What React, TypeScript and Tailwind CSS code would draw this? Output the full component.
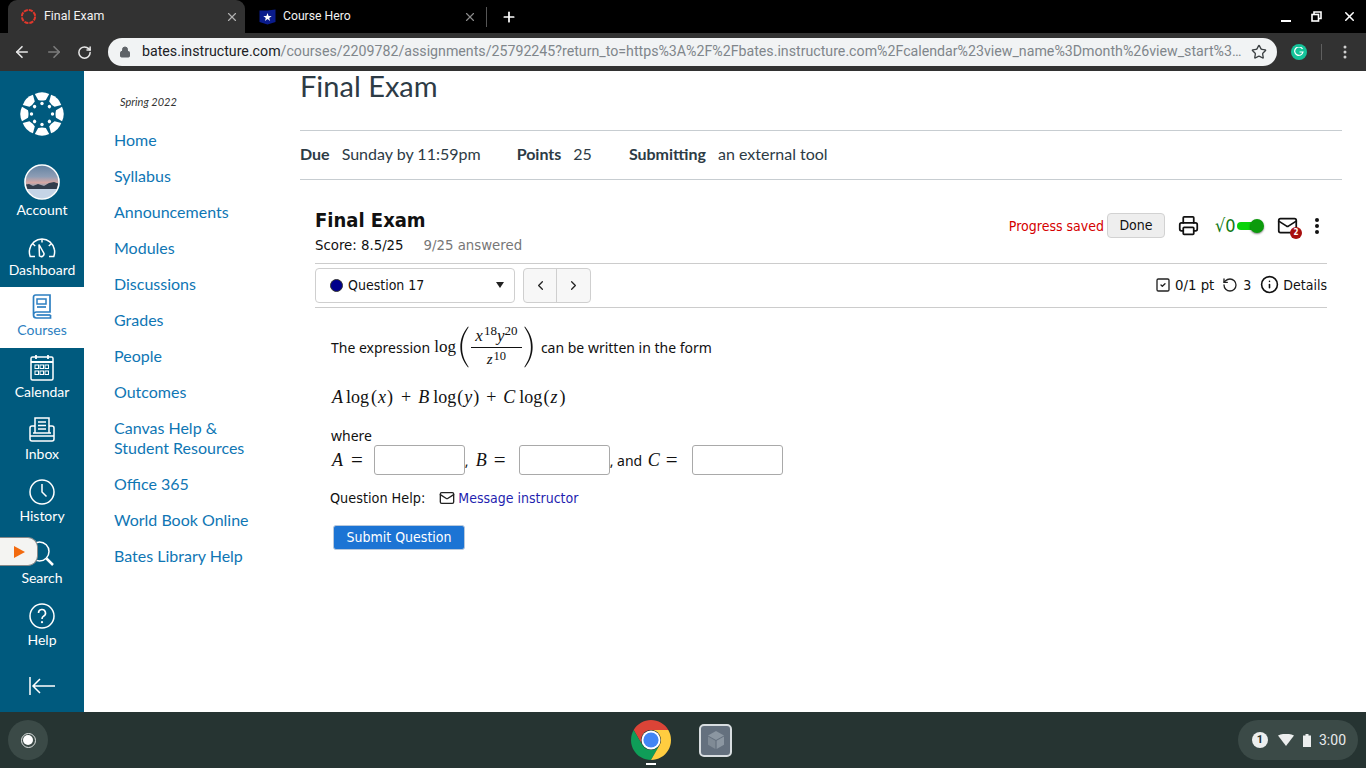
import React from "react";
import { ArrowLeft, ArrowRight, RotateCw, Lock, Star, X, Plus, Printer, Mail, RotateCcw, Info, ChevronLeft, ChevronRight, SquareCheck } from "lucide-react";

const lato = "font-['Lato','Open_Sans',sans-serif]";
const q = "font-['DejaVu_Sans_Condensed','DejaVu_Sans',sans-serif] [font-stretch:condensed]";
const body = "font-['Noto_Sans','DejaVu_Sans',sans-serif]";
const mathF = "font-['Liberation_Serif',serif]";

function CanvasLogo({ size, color }: { size: number; color: string }) {
  const blobs = [0, 45, 90, 135, 180, 225, 270, 315];
  return (
    <svg width={size} height={size} viewBox="-22 -22 44 44">
      {blobs.map((a) => (
        <g key={a} transform={`rotate(${a})`}>
          <path d="M-7.2 -20 Q0 -23.5 7.2 -20 L3.8 -14 Q0 -13 -3.8 -14 Z" fill={color} />
        </g>
      ))}
      {blobs.map((a) => (
        <circle key={a} cx={0} cy={-10.5} r={1.7} fill={color} transform={`rotate(${a})`} />
      ))}
    </svg>
  );
}

function TabFavicon() {
  return (
    <svg width="17" height="17" viewBox="0 0 17 17">
      <circle cx="8.5" cy="8.5" r="6.6" fill="none" stroke="#e0382c" strokeWidth="2" strokeDasharray="4.2 1.0" />
    </svg>
  );
}

function Avatar() {
  return (
    <svg width="36" height="36" viewBox="0 0 36 36">
      <defs>
        <linearGradient id="sky" x1="0" y1="0" x2="0" y2="1">
          <stop offset="0" stopColor="#5f7f9f" />
          <stop offset="0.35" stopColor="#8d9db5" />
          <stop offset="0.52" stopColor="#d8a7a3" />
          <stop offset="0.6" stopColor="#9aa0ae" />
        </linearGradient>
        <clipPath id="av"><circle cx="18" cy="18" r="16.5" /></clipPath>
      </defs>
      <g clipPath="url(#av)">
        <rect width="36" height="36" fill="url(#sky)" />
        <path d="M0 21 L5 20 L9 22 L14 20 L20 22 L25 19 L30 18 L36 20 V27 H0 Z" fill="#333d4c" />
        <rect y="25" width="36" height="11" fill="#c5d4e6" />
      </g>
      <circle cx="18" cy="18" r="17" fill="none" stroke="#fff" strokeWidth="1.6" />
    </svg>
  );
}

function IconDashboard({ c }: { c: string }) {
  return (
    <svg width="28" height="20" viewBox="0 0 28 20" fill="none" stroke={c} strokeWidth="1.5">
      <path d="M7 18.5 H2.2 C1.4 16 1 14 1.6 11.5 C3 5 8 1 14 1 C20 1 25 5 26.4 11.5 C27 14 26.6 16 25.8 18.5 H21" />
      <path d="M11 6.5 L16 15.5 A2.8 2.8 0 0 1 11.5 18 Z" />
      <path d="M14 1 V4.5 M5 6 L7.2 8 M23 6 L20.8 8" />
    </svg>
  );
}
function IconBook({ c }: { c: string }) {
  return (
    <svg width="20" height="26" viewBox="0 0 20 26" fill="none" stroke={c} strokeWidth="1.7">
      <path d="M1.5 21 V3 A2 2 0 0 1 3.5 1 H18 V18 H4.5 A3 3 0 0 0 1.5 21 A3 3 0 0 0 4.5 24 H18.5 V21" />
      <rect x="5" y="5" width="9" height="5" strokeWidth="1.5" />
      <path d="M5 13 H14" />
      <path d="M4.5 21 H18.5" />
    </svg>
  );
}
function IconCalendar({ c }: { c: string }) {
  return (
    <svg width="24" height="27" viewBox="0 0 24 27" fill="none" stroke={c} strokeWidth="1.5">
      <rect x="1" y="3" width="22" height="23" rx="1.5" />
      <path d="M1 8 H23 M6 1 V5 M18 1 V5" strokeWidth="1.8" />
      {[5, 10, 15].map((x) => [11, 17].map((y) => <rect key={`${x}-${y}`} x={x} y={y} width="3.5" height="3.5" strokeWidth="1" />))}
    </svg>
  );
}
function IconInbox({ c }: { c: string }) {
  return (
    <svg width="26" height="25" viewBox="0 0 26 25" fill="none" stroke={c} strokeWidth="1.5">
      <path d="M6 16 V1 H20 V16" />
      <path d="M9 5 H17 M9 8.5 H17 M9 12 H17" />
      <path d="M6 9 H3 A2 2 0 0 0 1 11 V22 A2 2 0 0 0 3 24 H23 A2 2 0 0 0 25 22 V11 A2 2 0 0 0 23 9 H20" />
      <path d="M1 19 H25 M4 16 H22" />
    </svg>
  );
}
function IconClock({ c }: { c: string }) {
  return (
    <svg width="26" height="26" viewBox="0 0 26 26" fill="none" stroke={c} strokeWidth="1.5">
      <circle cx="13" cy="13" r="12" />
      <path d="M13 5 V13 L17.5 17.5" />
    </svg>
  );
}
function IconSearch({ c }: { c: string }) {
  return (
    <svg width="26" height="26" viewBox="0 0 26 26" fill="none" stroke={c} strokeWidth="1.5">
      <circle cx="10.5" cy="10.5" r="9.5" />
      <path d="M17.5 17.5 L24 24" strokeWidth="2.5" />
    </svg>
  );
}
function IconHelp({ c }: { c: string }) {
  return (
    <svg width="26" height="26" viewBox="0 0 26 26" fill="none" stroke={c} strokeWidth="1.5">
      <circle cx="13" cy="13" r="12" />
      <path d="M9.5 10 A3.5 3.5 0 1 1 14.5 13.2 C13.4 13.9 13 14.6 13 16" strokeWidth="1.6" />
      <circle cx="13" cy="19.2" r="1.1" fill={c} stroke="none" />
    </svg>
  );
}

function SideItem({ icon, label, boxCls, iconCls }: { icon: React.ReactNode; label: string; boxCls: string; iconCls: string }) {
  return (
    <div className={`flex flex-col items-center ${boxCls}`}>
      <div className={`flex items-center justify-center ${iconCls}`}>{icon}</div>
      <div className={`${lato} text-[14px] leading-[20px]`}>{label}</div>
    </div>
  );
}

function Sidebar() {
  const w = "#ffffff";
  const std = "h-[62px] pt-[5px] text-white";
  return (
    <div className="relative w-[84px] shrink-0 bg-[#005a7e] flex flex-col">
      <div className="h-[92px] flex items-start justify-center pt-[21px]">
        <CanvasLogo size={44} color="#fff" />
      </div>
      <SideItem icon={<Avatar />} label="Account" boxCls="h-[62px] text-white" iconCls="h-[37px]" />
      <SideItem icon={<IconDashboard c={w} />} label="Dashboard" boxCls="h-[62px] pt-[10px] text-white" iconCls="h-[25px]" />
      <SideItem icon={<IconBook c="#2d7fc1" />} label="Courses" boxCls="h-[61px] pt-[6px] bg-white text-[#2d7fc1]" iconCls="h-[27px]" />
      <SideItem icon={<IconCalendar c={w} />} label="Calendar" boxCls={std} iconCls="h-[29px]" />
      <SideItem icon={<IconInbox c={w} />} label="Inbox" boxCls={std} iconCls="h-[29px]" />
      <SideItem icon={<IconClock c={w} />} label="History" boxCls={std} iconCls="h-[29px]" />
      <SideItem icon={<IconSearch c={w} />} label="Search" boxCls={std} iconCls="h-[29px]" />
      <SideItem icon={<IconHelp c={w} />} label="Help" boxCls={std} iconCls="h-[29px]" />
      <div className="flex justify-center pt-[19px]">
        <svg width="26" height="18" viewBox="0 0 26 18" fill="none" stroke="#fff" strokeWidth="1.5">
          <path d="M1 0 V18 M26 9 H4 M11 2 L4 9 L11 16" />
        </svg>
      </div>
      <div className="absolute left-0 top-[466px] w-[38px] h-[29px] bg-[#f4f4f2] rounded-r-[10px] border border-[#888] border-l-0 flex items-center pl-[14px]">
        <svg width="12" height="12" viewBox="0 0 12 12"><path d="M0 0 L11 6 L0 12 Z" fill="#f26a0f" /></svg>
      </div>
    </div>
  );
}

function TopBar() {
  return (
    <div className="shrink-0 bg-black">
      <div className="h-[33px] flex items-stretch relative text-white">
        <div className="w-[8px]" />
        <div className="w-[237px] bg-[#323232] rounded-t-[9px] flex items-center pl-[12px] pr-[6px] gap-[7px]">
          <TabFavicon />
          <span className="font-['Roboto',sans-serif] text-[12.4px] text-[#f1f1f1] flex-1">Final Exam</span>
          <X size={14} color="#b0b0b0" />
        </div>
        <div className="w-[241px] flex items-center pl-[14px] pr-[9px] gap-[7px]">
          <svg width="17" height="16" viewBox="0 0 17 16">
            <path d="M0.5 1.5 L8.5 1.5 L16.5 0.5 V13 L8.5 15.5 L0.5 13 Z" fill="#0a1c8c" />
            <path d="M8.5 4 L9.6 7 L12.7 7 L10.2 8.9 L11.1 12 L8.5 10.1 L5.9 12 L6.8 8.9 L4.3 7 L7.4 7 Z" fill="#fff" />
          </svg>
          <span className="font-['Roboto',sans-serif] text-[12.2px] text-[#f1f1f1] flex-1">Course Hero</span>
          <X size={14} color="#8a8a8a" />
        </div>
        <div className="w-px h-[20px] bg-[#555] self-center" />
        <div className="flex items-center pl-[14px]"><Plus size={16} strokeWidth={2.6} color="#fff" /></div>
        <div className="flex-1 flex items-center justify-end gap-[20px] pr-[9px]">
          <div className="w-[10px] h-[2px] bg-white mt-[8px]" />
          <svg width="11" height="11" viewBox="0 0 11 11" fill="none" stroke="#fff" strokeWidth="1.6"><path d="M3 3 V1 H10 V7.5 H7.5" /><rect x="1" y="3.5" width="6.5" height="6.5" /></svg>
          <X size={15} strokeWidth={2.4} color="#fff" />
        </div>
      </div>
      <div className="h-[38px] bg-[#323232] flex items-center">
        <div className="w-[108px] flex items-center pl-[13px] gap-[14px] shrink-0">
          <ArrowLeft size={18} color="#e8e8e8" strokeWidth={2.2} />
          <ArrowRight size={18} color="#7c7c7c" strokeWidth={2.2} />
          <RotateCw size={15} color="#e8e8e8" strokeWidth={2.4} />
        </div>
        <div className="w-[1169px] h-[28px] bg-[#f1f3f4] rounded-full flex items-center pl-[11px] pr-[10px] shrink-0">
          <Lock size={12} color="#5f6368" fill="#5f6368" className="shrink-0" />
          <div className="font-['Roboto',sans-serif] text-[14.2px] ml-[11px] whitespace-nowrap flex-1 min-w-0">
            <span className="text-[#202124]">bates.instructure.com</span>
            <span className="text-[#80868b]">/courses/2209782/assignments/25792245?return_to=https%3A%2F%2Fbates.instructure.com%2Fcalendar%23view_name%3Dmonth%26view_start%3…</span>
          </div>
          <Star size={16} color="#3c4043" className="ml-[8px] shrink-0" />
        </div>
        <div className="flex items-center pl-[14px]">
          <div className="w-[16px] h-[16px] rounded-full bg-[#15c39a] flex items-center justify-center">
            <svg width="10" height="10" viewBox="0 0 10 10" fill="none" stroke="#fff" strokeWidth="1.2"><path d="M8.5 2 A4.2 4.2 0 1 0 9 5 H5.5" /></svg>
          </div>
          <div className="w-px h-[16px] bg-[#5f5f5f] ml-[14px]" />
          <svg className="ml-[21px]" width="4" height="14" viewBox="0 0 4 14" fill="#d0d0d0"><circle cx="2" cy="2" r="1.5" /><circle cx="2" cy="7" r="1.5" /><circle cx="2" cy="12" r="1.5" /></svg>
        </div>
      </div>
    </div>
  );
}

function CourseNav() {
  const items = ["Home", "Syllabus", "Announcements", "Modules", "Discussions", "Grades", "People", "Outcomes"];
  const after = ["Office 365", "World Book Online", "Bates Library Help"];
  const cls = `${lato} text-[16px] leading-[20px] text-[#0f76b4]`;
  return (
    <div className="w-[216px] shrink-0 pl-[30px] pt-[25px]">
      <div className={`${lato} italic text-[11px] leading-[12px] text-[#333] pl-[6px] mb-[22px]`}>Spring 2022</div>
      <div className="flex flex-col gap-[16px]">
        {items.map((t) => <div key={t} className={cls}>{t}</div>)}
        <div className={cls}>Canvas Help &amp;<br />Student Resources</div>
        {after.map((t) => <div key={t} className={cls}>{t}</div>)}
      </div>
    </div>
  );
}

function Paren({ flip }: { flip?: boolean }) {
  return (
    <svg width="10" height="44" viewBox="0 0 11 46" className={flip ? "-scale-x-100" : ""}>
      <path d="M10 0.5 C4 8 1.5 15 1.5 23 C1.5 31 4 38 10 45.5 L10.6 45 C5.5 37 3.4 31 3.4 23 C3.4 15 5.5 9 10.6 1 Z" fill="#111" />
    </svg>
  );
}

function Sym({ children, cls = "" }: { children: React.ReactNode; cls?: string }) {
  return <span className={`italic ${cls}`}>{children}</span>;
}

function Eq({ cls }: { cls: string }) {
  return <span className={`${cls} text-[21px] leading-[20px]`}>=</span>;
}

function Field() {
  return <span className="block w-[91px] h-[30px] bg-white border border-[#a9a9a9] rounded-[3px] shrink-0" />;
}

function MathLine() {
  return (
    <div className={`${mathF} mt-[15px] text-[18px] leading-[24px] text-[#111] flex`}>
      <Sym cls="ml-[1px]">A</Sym>
      <span className="ml-[3px]">log</span>
      <span className="ml-[2px]">(</span>
      <Sym cls="ml-[1px]">x</Sym>
      <span className="ml-[1px]">)</span>
      <span className="ml-[8px]">+</span>
      <Sym cls="ml-[7px]">B</Sym>
      <span className="ml-[4px]">log</span>
      <span className="ml-[1px]">(</span>
      <Sym cls="ml-[1px]">y</Sym>
      <span className="ml-[1px]">)</span>
      <span className="ml-[7px]">+</span>
      <Sym cls="ml-[7px]">C</Sym>
      <span className="ml-[4px]">log</span>
      <span className="ml-[1px]">(</span>
      <Sym cls="ml-[1px]">z</Sym>
      <span className="ml-[2px]">)</span>
    </div>
  );
}

function Question() {
  return (
    <div className="pl-[15px] pr-[15px] pt-[27px]">
      <div className="flex items-start justify-between h-[56px]">
        <div>
          <div className={`${q} font-bold text-[20px] leading-[26px] text-[#111]`}>Final Exam</div>
          <div className={`${q} text-[14.8px] leading-[24px] text-[#111] flex`}>
            <span>Score: 8.5/25</span>
            <span className="ml-[20px] text-[#777]">9/25 answered</span>
          </div>
        </div>
        <div className="flex items-center pt-[6px] pr-[8px]">
          <span className={`${q} text-[14px] text-[#d50000] pt-[2px]`}>Progress saved</span>
          <div className={`${q} ml-[3px] w-[58px] h-[25px] bg-[#eeeeee] border border-[#d2d2d2] rounded-[4px] text-[14px] flex items-center justify-center text-[#111]`}>Done</div>
          <Printer size={21} strokeWidth={2} color="#111" className="ml-[13px]" />
          <span className={`${q} ml-[16px] w-[22px] text-[#127a12] text-[18px] leading-none`}>√0</span>
          <div className="relative w-[27px] h-[16px] flex items-center">
            <div className="w-[24px] h-[8px] rounded-full bg-[#0ad30a]" />
            <div className="absolute right-0 top-[1px] w-[14px] h-[14px] rounded-full bg-[#0c9b0c] shadow-[0_1px_2px_rgba(0,0,0,0.5)]" />
          </div>
          <div className="relative ml-[13px]">
            <Mail size={21} strokeWidth={2} color="#111" />
            <div className={`${q} absolute right-[-4px] bottom-[-3px] w-[12px] h-[12px] rounded-full bg-[#a80f0f] text-white text-[8px] font-bold leading-[12px] text-center`}>2</div>
          </div>
          <svg className="ml-[17px]" width="4" height="16" viewBox="0 0 4 16" fill="#111"><circle cx="2" cy="2" r="2" /><circle cx="2" cy="8" r="2" /><circle cx="2" cy="14" r="2" /></svg>
        </div>
      </div>
      <div className="border-t border-[#cccccc] pt-[3px] pb-[4px] flex items-center h-[45px] border-b">
        <div className="w-[200px] h-[35px] border border-[#cfcfcf] rounded-[4px] bg-white flex items-center pl-[14px] pr-[10px]">
          <span className="w-[13px] h-[13px] rounded-full bg-[#00008b] border border-[#333]" />
          <span className={`${q} ml-[5px] text-[14px] text-[#111] flex-1`}>Question 17</span>
          <svg width="8" height="6" viewBox="0 0 8 6"><path d="M0 0 H8 L4 6 Z" fill="#222" /></svg>
        </div>
        <div className="ml-[8px] w-[68px] h-[35px] border border-[#cfcfcf] rounded-[4px] bg-[#f7f7f7] flex items-center">
          <div className="w-[33px] h-full flex items-center justify-center border-r border-[#cfcfcf]"><ChevronLeft size={15} color="#222" /></div>
          <div className="flex-1 h-full flex items-center justify-center"><ChevronRight size={15} color="#222" /></div>
        </div>
        <div className={`${q} ml-auto flex items-center text-[14px] text-[#111]`}>
          <SquareCheck size={16} color="#222" />
          <span className="ml-[4px] text-[14.8px]">0/1 pt</span>
          <RotateCcw size={16} color="#222" className="ml-[8px]" />
          <span className="ml-[5px]">3</span>
          <Info size={19} color="#111" className="ml-[9px] -mt-[2px]" />
          <span className="ml-[4px]">Details</span>
        </div>
      </div>
      <div className={`${body} pl-[16px] text-[14px] text-[#111]`}>
        <div className="h-[46px] mt-[16px] flex items-center">
          <span>The expression</span>
          <span className={`${mathF} ml-[4px] text-[17px]`}>log</span>
          <span className="ml-[3px] flex"><Paren /></span>
          <span className={`${mathF} mx-[2px] w-[51px] inline-flex flex-col items-center text-[17px] leading-[20px]`}>
            <span className="w-full text-center border-b border-[#111] pb-[1px] whitespace-nowrap">
              <Sym>x</Sym><sup className="text-[13px] top-[-6px] ml-[1px]">18</sup><Sym>y</Sym><sup className="text-[13px] top-[-6px]">20</sup>
            </span>
            <span className="pt-[1px] whitespace-nowrap text-[15px]">
              <Sym>z</Sym><sup className="text-[12.5px] top-[-4px] ml-[1px]">10</sup>
            </span>
          </span>
          <span className="flex"><Paren flip /></span>
          <span className="ml-[7px]">can be written in the form</span>
        </div>
        <MathLine />
        <div className="mt-[17px] leading-[20px]">where</div>
        <div className="flex items-center h-[30px] mt-[-1px]">
          <span className={`${mathF} text-[18px] flex items-center`}><Sym cls="ml-[1px]">A</Sym><Eq cls="ml-[8px]" /></span>
          <span className="ml-[11px]"><Field /></span>
          <span className="w-[4px]">,</span>
          <span className={`${mathF} text-[18px] ml-[7px] flex items-center`}><Sym>B</Sym><Eq cls="ml-[7px]" /></span>
          <span className="ml-[13px]"><Field /></span>
          <span className="whitespace-pre w-[34px]">, and</span>
          <span className={`${mathF} text-[18px] ml-[4px] flex items-center`}><Sym>C</Sym><Eq cls="ml-[6px]" /></span>
          <span className="ml-[14px]"><Field /></span>
        </div>
        <div className={`${q} flex items-center mt-[13px] -ml-[1px] leading-[20px]`}>
          <span className="text-[14.3px]">Question Help:</span>
          <Mail size={16} color="#222" className="ml-[14px]" />
          <span className="ml-[3px] text-[#1f1fb0]">Message instructor</span>
        </div>
        <div className={`${q} mt-[17px] ml-[2px] w-[132px] h-[25px] bg-[#1c74d4] border border-[#b9c9dc] rounded-[3px] text-white text-[14px] flex items-center justify-center`}>Submit Question</div>
      </div>
    </div>
  );
}

function MainContent() {
  return (
    <div className="flex-1 min-w-0 pr-[24px]">
      <div className={`${lato} text-[29px] leading-[34px] text-[#2d3b45] -mt-[2px]`}>Final Exam</div>
      <div className="mt-[27px] border-t border-b border-[#c7cdd1] h-[50px] flex items-center">
        <div className={`${lato} text-[16px] text-[#2d3b45] flex pb-[2px]`}>
          <b>Due</b><span className="ml-[12px]">Sunday by 11:59pm</span>
          <b className="ml-[36px]">Points</b><span className="ml-[12px]">25</span>
          <b className="ml-[37px]">Submitting</b><span className="ml-[12px]">an external tool</span>
        </div>
      </div>
      <Question />
    </div>
  );
}

function Shelf() {
  return (
    <div className="h-[56px] shrink-0 bg-[#263432] flex items-center relative">
      <div className="ml-[8px] w-[40px] h-[40px] rounded-full bg-[#3b4a47] flex items-center justify-center">
        <div className="w-[15px] h-[15px] rounded-full border border-[#dfe3e2] flex items-center justify-center"><div className="w-[10px] h-[10px] rounded-full bg-white" /></div>
      </div>
      <div className="flex items-center gap-[28px] ml-[583px]">
        <div className="relative">
          <svg width="40" height="40" viewBox="0 0 40 40">
            <path d="M2.68 10 A20 20 0 0 1 37.32 10 L20 10 A10 10 0 0 0 11.34 25 Z" fill="#db4437" />
            <path d="M20 40 A20 20 0 0 1 2.68 10 L11.34 25 A10 10 0 0 0 28.66 25 Z" fill="#0f9d58" />
            <path d="M37.32 10 A20 20 0 0 1 20 40 L28.66 25 A10 10 0 0 0 20 10 Z" fill="#ffcd40" />
            <circle cx="20" cy="20" r="9.5" fill="#fff" />
            <circle cx="20" cy="20" r="7.6" fill="#4285f4" />
          </svg>
          <div className="absolute left-[15px] top-[43px] w-[10px] h-[2px] bg-white" />
        </div>
        <div className="w-[33px] h-[33px] rounded-[5px] border-2 border-[#d8dde0] bg-[#64707e] flex items-center justify-center">
          <svg width="20" height="20" viewBox="0 0 20 20"><path d="M10 1 L18 5.5 L10 10 L2 5.5 Z" fill="#8b96a1" /><path d="M2 6.5 L9.4 10.8 V19 L2 14.7 Z" fill="#7f8a95" /><path d="M18 6.5 L10.6 10.8 V19 L18 14.7 Z" fill="#8b96a1" /></svg>
        </div>
      </div>
      <div className="ml-auto mr-[8px] w-[120px] h-[40px] rounded-full bg-[#3b4a47] flex items-center pl-[14px] text-[#e8eaed]">
        <div className="w-[16px] h-[16px] rounded-full bg-[#eceeee] text-[#263432] font-['Roboto',sans-serif] font-bold text-[11px] leading-[16px] text-center">1</div>
        <svg className="ml-[10px]" width="16" height="12" viewBox="0 0 16 12"><path d="M0 1.5 Q8 -2 16 1.5 L8 12 Z" fill="#eceeee" /></svg>
        <svg className="ml-[9px]" width="8" height="13" viewBox="0 0 8 13"><path d="M2.5 0 H5.5 V1.5 H8 V13 H0 V1.5 H2.5 Z" fill="#eceeee" /></svg>
        <span className="ml-[8px] font-['Roboto',sans-serif] text-[14px]">3:00</span>
      </div>
    </div>
  );
}

export default function App() {
  return (
    <div className="w-[1366px] h-[768px] overflow-hidden flex flex-col bg-white">
      <TopBar />
      <div className="flex-1 min-h-0 flex">
        <Sidebar />
        <CourseNav />
        <MainContent />
      </div>
      <Shelf />
    </div>
  );
}
